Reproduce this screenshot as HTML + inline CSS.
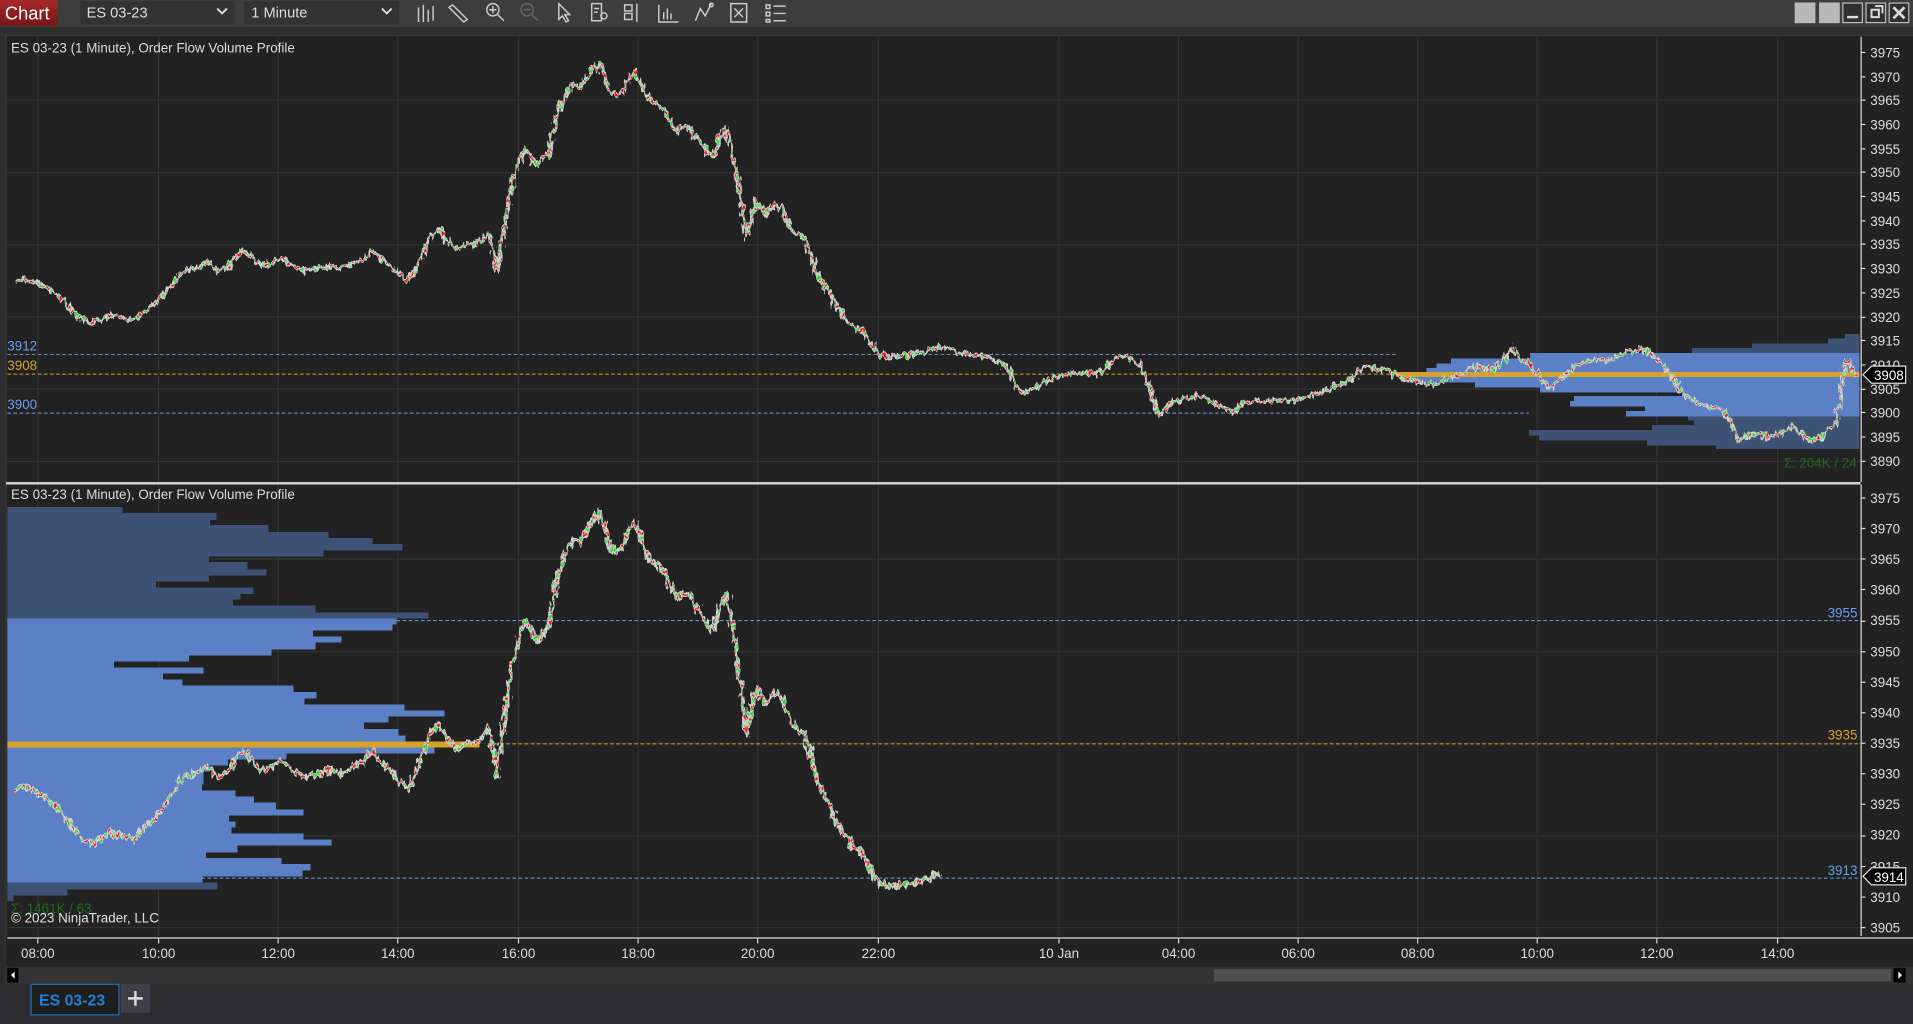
<!DOCTYPE html>
<html><head><meta charset="utf-8"><style>
html,body{margin:0;padding:0;background:#2d2d30;overflow:hidden}
svg{display:block}
text{font-family:"Liberation Sans",sans-serif}
</style></head><body>
<svg width="1913" height="1024" viewBox="0 0 1568 839" preserveAspectRatio="none" xmlns="http://www.w3.org/2000/svg">
<defs>
<linearGradient id="red" x1="0" y1="0" x2="0" y2="1"><stop offset="0" stop-color="#a52a2a"/><stop offset="1" stop-color="#7a1414"/></linearGradient>
<clipPath id="ctop"><rect x="6" y="30" width="1519" height="365"/></clipPath>
<clipPath id="cbot"><rect x="6" y="397" width="1519" height="370"/></clipPath>
<filter id="jag" x="-2%" y="-5%" width="104%" height="110%">
<feTurbulence type="fractalNoise" baseFrequency="0.35 0.12" numOctaves="2" seed="3" result="n"/>
<feDisplacementMap in="SourceGraphic" in2="n" scale="9" xChannelSelector="R" yChannelSelector="G"/>
</filter>
<polyline id="px" fill="none" points="12,230 20,228 30,232 38,236 45,240 52,246 60,255 68,262 75,265 82,262 90,258 100,260 110,262 118,255 125,250 130,245 140,235 150,222 160,220 170,215 178,222 185,220 192,212 200,205 207,212 215,218 222,216 230,212 240,218 250,222 260,220 270,218 280,220 290,215 298,212 305,205 312,212 320,218 328,225 335,230 342,218 350,200 355,192 360,188 367,198 375,205 382,200 390,200 396,196 400,190 404,205 407,222 409,210 412,195 416,170 420,150 425,135 430,122 435,128 440,135 445,130 450,125 455,100 460,85 465,75 470,70 475,72 480,65 485,58 490,52 495,60 500,75 505,78 510,75 515,65 520,58 525,68 530,80 537,85 545,90 550,100 555,108 560,104 565,105 570,112 575,118 580,125 585,128 590,112 595,105 598,115 600,125 603,138 605,150 608,170 612,195 616,178 620,165 624,172 628,175 634,168 640,170 645,180 650,190 655,192 660,195 665,210 670,225 675,232 680,240 685,250 690,258 695,262 700,268 705,270 710,275 715,284 720,290 727,292 735,292 742,291 750,290 760,288 770,284 780,288 790,290 800,291 810,292 818,296 825,300 830,310 835,318 840,322 845,320 852,315 860,310 870,308 880,305 890,306 900,306 908,300 915,293 922,292 930,295 935,300 940,310 945,328 950,340 955,336 960,330 970,327 980,325 988,326 995,330 1002,334 1010,338 1020,330 1030,328 1045,328 1060,328 1070,326 1080,322 1090,318 1100,315 1110,308 1120,300 1130,302 1140,305 1150,310 1160,312 1168,314 1175,315 1182,312 1190,310 1200,305 1210,300 1218,301 1225,302 1232,295 1240,285 1245,293 1255,300 1262,308 1270,318 1275,314 1280,310 1290,300 1300,295 1310,296 1320,295 1330,290 1345,285 1352,290 1360,295 1368,305 1375,318 1382,324 1390,330 1400,333 1410,335 1418,345 1425,362 1432,358 1440,355 1450,358 1460,355 1465,352 1470,350 1478,356 1485,362 1492,358 1500,352 1505,345 1508,330 1510,312 1512,298 1515,296 1520,305 1523,308"/>
<polyline id="pxb" fill="none" points="12,230 20,228 30,232 38,236 45,240 52,246 60,255 68,262 75,265 82,262 90,258 100,260 110,262 118,255 125,250 130,245 140,235 150,222 160,220 170,215 178,222 185,220 192,212 200,205 207,212 215,218 222,216 230,212 240,218 250,222 260,220 270,218 280,220 290,215 298,212 305,205 312,212 320,218 328,225 335,230 342,218 350,200 355,192 360,188 367,198 375,205 382,200 390,200 396,196 400,190 404,205 407,222 409,210 412,195 416,170 420,150 425,135 430,122 435,128 440,135 445,130 450,125 455,100 460,85 465,75 470,70 475,72 480,65 485,58 490,52 495,60 500,75 505,78 510,75 515,65 520,58 525,68 530,80 537,85 545,90 550,100 555,108 560,104 565,105 570,112 575,118 580,125 585,128 590,112 595,105 598,115 600,125 603,138 605,150 608,170 612,195 616,178 620,165 624,172 628,175 634,168 640,170 645,180 650,190 655,192 660,195 665,210 670,225 675,232 680,240 685,250 690,258 695,262 700,268 705,270 710,275 715,284 720,290 727,292 735,292 742,291 750,290 760,288 770,284"/>
</defs>
<!-- toolbar -->
<rect x="0" y="0" width="1568" height="22" fill="#3d3d3d"/>
<rect x="0" y="22" width="1568" height="8" fill="#2f2f2f"/>
<rect x="0" y="0" width="47" height="21" fill="url(#red)"/>
<text x="4" y="16" font-size="15" fill="#fff">Chart</text>
<rect x="66" y="1" width="126" height="19" fill="#333"/>
<text x="71" y="14.5" font-size="12" fill="#ddd">ES 03-23</text>
<path d="M178 7 l4 4 l4 -4" stroke="#ddd" stroke-width="1.6" fill="none"/>
<rect x="200" y="1" width="127" height="19" fill="#333"/>
<text x="206" y="14.5" font-size="12" fill="#ddd">1 Minute</text>
<path d="M313 7 l4 4 l4 -4" stroke="#ddd" stroke-width="1.6" fill="none"/>
<g stroke="#ccc" fill="none" stroke-width="1.2">
<path d="M343 6v12M347 4v14M351 8v10M355 5v12"/>
<path d="M371 4l12 12l-3 2l-12 -12z"/>
<circle cx="404" cy="8" r="5"/><path d="M408 12l5 5M401 8h6M404 5v6"/>
<circle cx="432" cy="8" r="5" stroke="#666"/><path d="M436 12l5 5M429 8h6" stroke="#666"/>
<path d="M458 3v13l3-3l3 5l2-1l-3-5h4z"/>
<path d="M485 3h8v14h-8z M487 7h4M487 10h3"/><circle cx="495" cy="13" r="2.5"/>
<path d="M512 4h6v5h-6zM512 11h6v5h-6zM522 3v15"/>
<path d="M540 4v14h16M544 10v6M547 7v9M550 11v5"/>
<path d="M570 17l4-10l4 6l5-10"/><circle cx="583" cy="4" r="1.5"/>
<path d="M599 3h13v15h-13zM602 7l7 7M609 7l-7 7"/>
<path d="M628 4h3v3h-3zM628 10h3v3h-3zM628 16h3v2h-3zM634 5h10M634 11h10M634 17h10"/>
</g>
<!-- window buttons -->
<rect x="1471" y="2" width="17" height="17" fill="#b8b8b8"/>
<rect x="1491" y="2" width="17" height="17" fill="#b8b8b8"/>
<rect x="1510.5" y="2.5" width="16" height="16" fill="#2f2f2f" stroke="#bbb"/>
<path d="M1514 14h9" stroke="#ddd" stroke-width="2"/>
<rect x="1529.5" y="2.5" width="16" height="16" fill="#2f2f2f" stroke="#bbb"/>
<path d="M1534 8h6v6h-6zM1537 5h6v6" stroke="#ddd" stroke-width="1.6" fill="none"/>
<rect x="1548.5" y="2.5" width="16" height="16" fill="#2f2f2f" stroke="#bbb"/>
<path d="M1552 6l9 9M1561 6l-9 9" stroke="#ddd" stroke-width="2.2"/>

<!-- chart frame -->
<rect x="5" y="29" width="1563" height="777" fill="#222"/>
<rect x="5" y="29" width="1563" height="777" fill="none" stroke="#3a3a3a"/>
<!-- grid -->
<g stroke="#333" stroke-width="1">
<path d="M31 30V395M130 30V395M228 30V395M326 30V395M425 30V395M523 30V395M621 30V395M720 30V395M868 30V395M966 30V395M1064 30V395M1162 30V395M1260 30V395M1358 30V395M1457 30V395"/>
<path d="M31 397V767M130 397V767M228 397V767M326 397V767M425 397V767M523 397V767M621 397V767M720 397V767M868 397V767M966 397V767M1064 397V767M1162 397V767M1260 397V767M1358 397V767M1457 397V767"/>
<path d="M6 82H1525M6 141.5H1525M6 200.6H1525M6 259.7H1525M6 318.8H1525M6 378H1525"/>
<path d="M6 458H1525M6 534H1525M6 609H1525M6 685H1525M6 760H1525"/>
</g>
<!-- top profile -->
<g clip-path="url(#ctop)">
<g transform="scale(0.8197) translate(1400,320) scale(0.33333)" shape-rendering="crispEdges">
<g fill="#3e5275">
<rect x="1335" y="42" width="43" height="14"/><rect x="1284" y="55" width="94" height="16"/><rect x="1056" y="70" width="322" height="15"/><rect x="876" y="84" width="502" height="16"/>
<rect x="864" y="288" width="514" height="13"/><rect x="882" y="300" width="496" height="16"/><rect x="756" y="315" width="622" height="16"/><rect x="387" y="330" width="991" height="16"/><rect x="417" y="345" width="961" height="16"/><rect x="741" y="360" width="637" height="16"/><rect x="948" y="375" width="430" height="12"/>
</g>
<g fill="#5b80c6">
<rect x="390" y="99" width="988" height="17"/><rect x="153" y="115" width="1225" height="16"/><rect x="110" y="130" width="1268" height="14"/><rect x="80" y="143" width="1298" height="13"/>
<rect x="20" y="170" width="1358" height="17"/><rect x="225" y="186" width="1153" height="16"/><rect x="420" y="201" width="958" height="16"/><rect x="846" y="216" width="532" height="13"/><rect x="522" y="228" width="856" height="16"/><rect x="510" y="243" width="868" height="16"/><rect x="735" y="258" width="643" height="16"/><rect x="678" y="273" width="700" height="16"/>
</g>
<rect x="-10" y="155" width="1388" height="15" fill="#d6a22a"/>
</g>
<path d="M6 290.5H1145M6 338.5H1253" stroke="#6d9eeb" stroke-dasharray="3 2" stroke-width="0.8"/>
<path d="M6 306.5H1145" stroke="#d6a22a" stroke-dasharray="3 2" stroke-width="0.8"/>
<g filter="url(#jag)">
<use href="#px" stroke="#cfcfcf" stroke-width="3.4" stroke-linejoin="round"/>
<use href="#px" stroke="#ee1010" stroke-width="1.3" stroke-dasharray="2 5"/>
<use href="#px" stroke="#22dd22" stroke-width="1.3" stroke-dasharray="2 5" stroke-dashoffset="3.5"/>
</g>
</g>
<text x="6" y="287" font-size="11" fill="#6d9eeb">3912</text>
<text x="6" y="303" font-size="11" fill="#d6a22a">3908</text>
<text x="6" y="335" font-size="11" fill="#6d9eeb">3900</text>
<text x="1462" y="383" font-size="11" fill="#1b6b1b">Σ: 204K / 24</text>
<text x="9" y="43" font-size="11" fill="#ddd">ES 03-23 (1 Minute), Order Flow Volume Profile</text>
<!-- separator -->
<rect x="5" y="395" width="1563" height="2" fill="#d8d8d8"/>

<!-- bottom profile -->
<g clip-path="url(#cbot)">
<g transform="scale(0.8197) translate(0,490) scale(0.33333)" shape-rendering="crispEdges">
<g fill="#3e5275">
<rect x="18" y="50" width="350" height="19"/><rect x="18" y="68" width="632" height="21"/><rect x="18" y="88" width="612" height="18"/><rect x="18" y="105" width="788" height="22"/><rect x="18" y="126" width="968" height="19"/><rect x="18" y="144" width="1100" height="19"/><rect x="18" y="162" width="1190" height="19"/><rect x="18" y="180" width="953" height="19"/><rect x="18" y="198" width="609" height="19"/><rect x="18" y="216" width="725" height="22"/><rect x="18" y="237" width="782" height="19"/><rect x="18" y="255" width="609" height="19"/><rect x="18" y="273" width="450" height="19"/><rect x="18" y="291" width="743" height="20"/><rect x="18" y="310" width="704" height="18"/><rect x="18" y="327" width="681" height="19"/><rect x="18" y="345" width="929" height="22"/><rect x="18" y="366" width="1268" height="19"/>
<rect x="18" y="1176" width="635" height="21"/><rect x="18" y="1196" width="185" height="19"/><rect x="18" y="1214" width="22" height="18"/>
</g>
<g fill="#5b80c6">
<rect x="18" y="384" width="1172" height="19"/><rect x="18" y="402" width="1160" height="19"/><rect x="18" y="420" width="921" height="19"/><rect x="18" y="438" width="1007" height="19"/><rect x="18" y="456" width="929" height="22"/><rect x="18" y="477" width="797" height="19"/><rect x="18" y="495" width="549" height="19"/><rect x="18" y="513" width="324" height="19"/><rect x="18" y="531" width="593" height="19"/><rect x="18" y="549" width="471" height="19"/><rect x="18" y="567" width="530" height="19"/><rect x="18" y="585" width="863" height="21"/><rect x="18" y="605" width="932" height="19"/><rect x="18" y="623" width="896" height="20"/><rect x="18" y="642" width="1196" height="19"/><rect x="18" y="660" width="1316" height="19"/><rect x="18" y="678" width="1148" height="19"/><rect x="18" y="696" width="1074" height="21"/><rect x="18" y="716" width="1178" height="20"/><rect x="18" y="735" width="1199" height="19"/>
<rect x="18" y="771" width="1286" height="19"/><rect x="18" y="789" width="842" height="19"/><rect x="18" y="807" width="666" height="19"/><rect x="18" y="825" width="610" height="19"/><rect x="18" y="843" width="592" height="22"/><rect x="18" y="864" width="592" height="19"/><rect x="18" y="882" width="588" height="19"/><rect x="18" y="900" width="689" height="19"/><rect x="18" y="918" width="744" height="19"/><rect x="18" y="936" width="810" height="22"/><rect x="18" y="957" width="893" height="19"/><rect x="18" y="975" width="669" height="19"/><rect x="18" y="993" width="689" height="19"/><rect x="18" y="1011" width="677" height="19"/><rect x="18" y="1029" width="893" height="19"/><rect x="18" y="1047" width="977" height="19"/><rect x="18" y="1065" width="695" height="21"/><rect x="18" y="1085" width="600" height="19"/><rect x="18" y="1103" width="827" height="19"/><rect x="18" y="1121" width="914" height="19"/><rect x="18" y="1139" width="890" height="20"/><rect x="18" y="1158" width="590" height="19"/>
</g>
<rect x="18" y="753" width="1420" height="18" fill="#d6a22a"/>
</g>
<path d="M325 508.5H1525M165 719.5H1525" stroke="#6d9eeb" stroke-dasharray="3 2" stroke-width="0.8"/>
<path d="M400 609.5H1525" stroke="#d6a22a" stroke-dasharray="3 2" stroke-width="0.8"/>
<g filter="url(#jag)">
<g transform="translate(0,353.1) scale(1,1.276)">
<use href="#pxb" stroke="#cfcfcf" stroke-width="3.4" stroke-linejoin="round" vector-effect="non-scaling-stroke"/>
<use href="#pxb" stroke="#ee1010" stroke-width="1.3" stroke-dasharray="2 5" vector-effect="non-scaling-stroke"/>
<use href="#pxb" stroke="#22dd22" stroke-width="1.3" stroke-dasharray="2 5" stroke-dashoffset="3.5" vector-effect="non-scaling-stroke"/>
</g>
</g>
</g>
<text x="9" y="409" font-size="11" fill="#ddd">ES 03-23 (1 Minute), Order Flow Volume Profile</text>
<text x="1498" y="506" font-size="11" fill="#6d9eeb">3955</text>
<text x="1498" y="606" font-size="11" fill="#d6a22a">3935</text>
<text x="1498" y="717" font-size="11" fill="#6d9eeb">3913</text>
<text x="9" y="748" font-size="11" fill="#1b6b1b">Σ: 1461K / 63</text>
<text x="9" y="756" font-size="11" fill="#e0e0e0">© 2023 NinjaTrader, LLC</text>

<!-- price axis -->
<rect x="1525" y="30" width="43" height="737" fill="#222"/>
<path d="M1525.5 30V395M1525.5 397V767" stroke="#d8d8d8"/>
<g font-size="11" fill="#ddd" stroke="none">
<text x="1533" y="47">3975</text><text x="1533" y="67">3970</text><text x="1533" y="86">3965</text><text x="1533" y="106">3960</text><text x="1533" y="126">3955</text><text x="1533" y="145">3950</text><text x="1533" y="165">3945</text><text x="1533" y="185">3940</text><text x="1533" y="204">3935</text><text x="1533" y="224">3930</text><text x="1533" y="244">3925</text><text x="1533" y="264">3920</text><text x="1533" y="283">3915</text><text x="1533" y="303">3910</text><text x="1533" y="323">3905</text><text x="1533" y="342">3900</text><text x="1533" y="362">3895</text><text x="1533" y="382">3890</text>
<text x="1533" y="412">3975</text><text x="1533" y="437">3970</text><text x="1533" y="462">3965</text><text x="1533" y="487">3960</text><text x="1533" y="512">3955</text><text x="1533" y="538">3950</text><text x="1533" y="563">3945</text><text x="1533" y="588">3940</text><text x="1533" y="613">3935</text><text x="1533" y="638">3930</text><text x="1533" y="663">3925</text><text x="1533" y="688">3920</text><text x="1533" y="714">3915</text><text x="1533" y="739">3910</text><text x="1533" y="764">3905</text>
</g>
<g stroke="#d8d8d8">
<path d="M1525 43h4M1525 63h4M1525 82h4M1525 102h4M1525 122h4M1525 141h4M1525 161h4M1525 181h4M1525 200h4M1525 220h4M1525 240h4M1525 260h4M1525 279h4M1525 299h4M1525 319h4M1525 338h4M1525 358h4M1525 378h4"/>
<path d="M1525 408h4M1525 433h4M1525 458h4M1525 483h4M1525 509h4M1525 534h4M1525 559h4M1525 584h4M1525 609h4M1525 634h4M1525 659h4M1525 685h4M1525 710h4M1525 735h4M1525 760h4"/>
</g>
<path d="M1527 307l7 -7h28v14h-28z" fill="#000" stroke="#ddd"/>
<text x="1536" y="311.5" font-size="11" fill="#fff">3908</text>
<path d="M1527 718l7 -7h28v14h-28z" fill="#000" stroke="#ddd"/>
<text x="1536" y="722.5" font-size="11" fill="#fff">3914</text>

<!-- time axis -->
<rect x="5" y="767" width="1563" height="25" fill="#222"/>
<path d="M6 768.5H1568" stroke="#d8d8d8"/>
<g stroke="#d8d8d8"><path d="M31 769v4M130 769v4M228 769v4M326 769v4M425 769v4M523 769v4M621 769v4M720 769v4M868 769v4M966 769v4M1064 769v4M1162 769v4M1260 769v4M1358 769v4M1457 769v4"/></g>
<g font-size="11" fill="#ddd" text-anchor="middle">
<text x="31" y="785">08:00</text><text x="130" y="785">10:00</text><text x="228" y="785">12:00</text><text x="326" y="785">14:00</text><text x="425" y="785">16:00</text><text x="523" y="785">18:00</text><text x="621" y="785">20:00</text><text x="720" y="785">22:00</text><text x="868" y="785">10 Jan</text><text x="966" y="785">04:00</text><text x="1064" y="785">06:00</text><text x="1162" y="785">08:00</text><text x="1260" y="785">10:00</text><text x="1358" y="785">12:00</text><text x="1457" y="785">14:00</text>
</g>
<!-- scrollbar -->
<rect x="5" y="792" width="1563" height="14" fill="#333"/>
<rect x="6" y="793" width="9" height="12" fill="#000"/>
<path d="M12 796l-3 3l3 3z" fill="#fff"/>
<rect x="995" y="794" width="555" height="10" fill="#505050"/>
<rect x="1552" y="793" width="10" height="12" fill="#000"/>
<path d="M1556 796l3 3l-3 3z" fill="#fff"/>
<!-- tabs -->
<rect x="0" y="806" width="1568" height="33" fill="#2d2d30"/>
<rect x="25.5" y="806.5" width="72" height="25" fill="#1e1e1e" stroke="#1b6fc0"/>
<text x="32" y="824" font-size="13" font-weight="bold" fill="#1e80d8">ES 03-23</text>
<rect x="99" y="806" width="24" height="24" fill="#3f3f46"/>
<path d="M111 812v12M105 818h12" stroke="#ddd" stroke-width="2"/>
</svg>
</body></html>
